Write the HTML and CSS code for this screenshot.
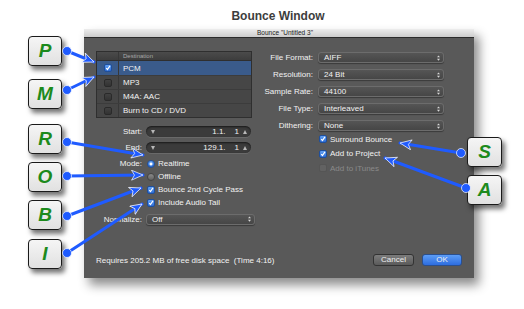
FILE: index.html
```html
<!DOCTYPE html>
<html lang="en">
<head>
    <meta charset="UTF-8">
    <title>Bounce Window</title>
    <link rel="stylesheet" href="styles.css">
</head>
<body>
    <div class="stage">
        <h1 class="heading">Bounce Window</h1>

        <!-- The dialog itself -->
        <div class="window">
            <div class="titlebar">Bounce "Untitled 3"</div>
            <div class="panel">
                <div class="columns">
                    <div class="col-left">
                        <div class="dest">
                            <div class="dest-head"><span class="cell-check"></span><span class="cell-name">Destination</span></div>
                            <div class="dest-row selected">
                                <span class="cell-check"><i class="check on"><svg viewBox="0 0 8 8"><path d="M1.6 4.1 L3.3 6 L6.6 1.2"/></svg></i></span>
                                <span class="cell-name">PCM</span>
                            </div>
                            <div class="dest-row">
                                <span class="cell-check"><i class="check"></i></span>
                                <span class="cell-name">MP3</span>
                            </div>
                            <div class="dest-row">
                                <span class="cell-check"><i class="check"></i></span>
                                <span class="cell-name">M4A: AAC</span>
                            </div>
                            <div class="dest-row">
                                <span class="cell-check"><i class="check"></i></span>
                                <span class="cell-name">Burn to CD / DVD</span>
                            </div>
                        </div>

                        <div class="row row-start">
                            <span class="label">Start:</span>
                            <div class="spin"><i class="tri-down"></i><span class="val">1.1.</span><span class="sub">1</span><i class="tri-up"></i></div>
                        </div>
                        <div class="row row-end">
                            <span class="label">End:</span>
                            <div class="spin"><i class="tri-down"></i><span class="val">129.1.</span><span class="sub">1</span><i class="tri-up"></i></div>
                        </div>
                        <div class="row row-opt row-mode">
                            <span class="label">Mode:</span>
                            <div class="opt"><i class="radio on"></i>Realtime</div>
                        </div>
                        <div class="row row-opt">
                            <span class="label"></span>
                            <div class="opt"><i class="radio"></i>Offline</div>
                        </div>
                        <div class="row row-opt">
                            <span class="label"></span>
                            <div class="opt"><i class="check on"><svg viewBox="0 0 8 8"><path d="M1.6 4.1 L3.3 6 L6.6 1.2"/></svg></i>Bounce 2nd Cycle Pass</div>
                        </div>
                        <div class="row row-opt">
                            <span class="label"></span>
                            <div class="opt"><i class="check on"><svg viewBox="0 0 8 8"><path d="M1.6 4.1 L3.3 6 L6.6 1.2"/></svg></i>Include Audio Tail</div>
                        </div>
                        <div class="row row-norm">
                            <span class="label">Normalize:</span>
                            <div class="select wide">Off<svg class="updown" viewBox="0 0 4 8"><path d="M0 3 L2 0.5 L4 3 Z M0 5 L2 7.5 L4 5 Z"/></svg></div>
                        </div>
                    </div>

                    <div class="col-right">
                        <div class="row row-sel">
                            <span class="label">File Format:</span>
                            <div class="select">AIFF<svg class="updown" viewBox="0 0 4 8"><path d="M0 3 L2 0.5 L4 3 Z M0 5 L2 7.5 L4 5 Z"/></svg></div>
                        </div>
                        <div class="row row-sel">
                            <span class="label">Resolution:</span>
                            <div class="select">24 Bit<svg class="updown" viewBox="0 0 4 8"><path d="M0 3 L2 0.5 L4 3 Z M0 5 L2 7.5 L4 5 Z"/></svg></div>
                        </div>
                        <div class="row row-sel">
                            <span class="label">Sample Rate:</span>
                            <div class="select">44100<svg class="updown" viewBox="0 0 4 8"><path d="M0 3 L2 0.5 L4 3 Z M0 5 L2 7.5 L4 5 Z"/></svg></div>
                        </div>
                        <div class="row row-sel">
                            <span class="label">File Type:</span>
                            <div class="select">Interleaved<svg class="updown" viewBox="0 0 4 8"><path d="M0 3 L2 0.5 L4 3 Z M0 5 L2 7.5 L4 5 Z"/></svg></div>
                        </div>
                        <div class="row row-sel">
                            <span class="label">Dithering:</span>
                            <div class="select">None<svg class="updown" viewBox="0 0 4 8"><path d="M0 3 L2 0.5 L4 3 Z M0 5 L2 7.5 L4 5 Z"/></svg></div>
                        </div>

                        <div class="right-checks">
                            <div class="opt"><i class="check on"><svg viewBox="0 0 8 8"><path d="M1.6 4.1 L3.3 6 L6.6 1.2"/></svg></i>Surround Bounce</div>
                            <div class="opt"><i class="check on"><svg viewBox="0 0 8 8"><path d="M1.6 4.1 L3.3 6 L6.6 1.2"/></svg></i>Add to Project</div>
                            <div class="opt disabled"><i class="check"></i>Add to iTunes</div>
                        </div>
                    </div>
                </div>

                <div class="footer">
                    <span class="disk">Requires 205.2 MB of free disk space  (Time 4:16)</span>
                    <div class="buttons">
                        <span class="btn">Cancel</span>
                        <span class="btn ok">OK</span>
                    </div>
                </div>
            </div>
        </div>

        <!-- Lettered callouts -->
        <div class="callout callout-p">P</div>
        <div class="callout callout-m">M</div>
        <div class="callout callout-r">R</div>
        <div class="callout callout-o">O</div>
        <div class="callout callout-b">B</div>
        <div class="callout callout-i">I</div>
        <div class="callout callout-s">S</div>
        <div class="callout callout-a">A</div>

        <svg class="arrows" viewBox="0 0 524 309" width="524" height="309">
            <defs>
                <marker id="head" markerUnits="userSpaceOnUse" markerWidth="14" markerHeight="12" refX="12" refY="5.5" orient="auto">
                    <path d="M0.5 0.5 L12 5.5 L0.5 10.5 L3.5 5.5 Z" fill="#1f5bff" stroke="#fff" stroke-width="0.7"/>
                </marker>
            </defs>
            <g stroke="#1f5bff" stroke-width="3" stroke-linecap="round" marker-end="url(#head)">
                <line x1="67" y1="51" x2="94" y2="62"/>
                <line x1="67" y1="90" x2="94" y2="77"/>
                <line x1="67" y1="142" x2="143" y2="155"/>
                <line x1="67" y1="176" x2="143" y2="175"/>
                <line x1="67" y1="216" x2="141" y2="188"/>
                <line x1="67" y1="253" x2="142" y2="204"/>
                <line x1="461" y1="153" x2="400" y2="143"/>
                <line x1="466" y1="188" x2="385" y2="158"/>
            </g>
            <g fill="#1f5bff" stroke="#fff" stroke-width="0.7">
                <circle cx="67" cy="51" r="4.5"/>
                <circle cx="67" cy="90" r="4.5"/>
                <circle cx="67" cy="142" r="4.5"/>
                <circle cx="67" cy="176" r="4.5"/>
                <circle cx="67" cy="216" r="4.5"/>
                <circle cx="67" cy="253" r="4.5"/>
                <circle cx="461" cy="153" r="4.5"/>
                <circle cx="466" cy="188" r="4.5"/>
            </g>
        </svg>
    </div>
</body>
</html>
```

FILE: styles.css
```css
/* Bounce window screenshot with callouts */
* {
    box-sizing: border-box;
}
body {
    margin: 0;
    background: #fff;
    font-family: "Liberation Sans", Arial, sans-serif;
}
.stage {
    position: relative;
    width: 524px;
    height: 309px;
    overflow: hidden;
}
.heading {
    margin: 0;
    height: 29px;
    padding: 10px 0 0 32px;
    text-align: center;
    font-size: 12px;
    line-height: 12px;
    font-weight: bold;
    color: #3d3d3d;
}

/* Window */
.window {
    margin-left: 84px;
    width: 390px;
    height: 249px;
    display: flex;
    flex-direction: column;
    background: #595959;
    box-shadow: 5px 7px 10px rgba(0, 0, 0, 0.45);
}
.titlebar {
    height: 9px;
    padding-left: 12px;
    background: linear-gradient(#ededed, #cdcdcd);
    border-bottom: 1px solid #2c2c2c;
    font-size: 6.5px;
    line-height: 8px;
    text-align: center;
    color: #222;
}
.panel {
    flex: 1;
    display: flex;
    flex-direction: column;
    padding: 13px 12px 12px 12px;
    color: #f2f2f2;
    font-size: 8px;
}
.columns {
    display: flex;
    align-items: flex-start;
}
.col-left {
    width: 159px;
}
.col-right {
    width: 186px;
    margin-left: 3px;
    margin-top: -2px;
}

/* Destination table */
.dest {
    width: 156px;
    background: #464646;
    border: 1px solid #2f2f2f;
}
.dest-head {
    display: flex;
    height: 9px;
    background: linear-gradient(#4b4b4b, #3d3d3d);
    border-bottom: 1px solid #2f2f2f;
    font-size: 6px;
    line-height: 8px;
    color: #a8a8a8;
}
.dest-row {
    display: flex;
    align-items: center;
    height: 14px;
    border-top: 1px solid #3c3c3c;
}
.dest-row:nth-child(2) {
    border-top: none;
}
.dest-row.selected {
    background: #3a5b8b;
}
.cell-check {
    width: 22px;
    align-self: stretch;
    display: flex;
    align-items: center;
    justify-content: center;
    border-right: 1px solid #383838;
}
.cell-name {
    padding-left: 4px;
}

/* Check boxes and radios */
.check {
    display: inline-block;
    width: 8px;
    height: 8px;
    border-radius: 2px;
    background: linear-gradient(#424242, #333);
    border: 1px solid #2a2a2a;
}
.check.on {
    background: linear-gradient(#63a2f5, #2c6cd5);
    border-color: #1f4f9c;
}
.check svg {
    display: block;
    width: 6px;
    height: 6px;
}
.check svg path {
    fill: none;
    stroke: #fff;
    stroke-width: 1.5;
}
.radio {
    display: inline-block;
    width: 8px;
    height: 8px;
    border-radius: 50%;
    background: linear-gradient(#8a8a8a, #626262);
    border: 1px solid #444;
}
.radio.on {
    background: radial-gradient(circle, #fff 0 1.2px, transparent 1.8px), linear-gradient(#63a2f5, #2c6cd5);
    border-color: #1f4f9c;
}

/* Label + control rows */
.row {
    display: flex;
    align-items: center;
}
.label {
    width: 46px;
    margin-right: 4px;
    text-align: right;
    white-space: nowrap;
}
.col-right .label {
    width: 55px;
    margin-right: 5px;
}
.row-start {
    margin-top: 8px;
    height: 11px;
}
.row-end {
    margin-top: 5px;
    height: 11px;
}
.row-opt {
    height: 13px;
}
.row-mode {
    margin-top: 4px;
}
.row-norm {
    margin-top: 4px;
    height: 12px;
}
.row-sel {
    height: 17px;
}
.opt {
    display: flex;
    align-items: center;
    gap: 3px;
    padding-left: 1px;
    white-space: nowrap;
}
.opt.disabled {
    color: #8a8a8a;
}
.opt.disabled .check {
    background: #626262;
    border-color: #555;
}
.right-checks {
    margin-left: 60px;
    margin-top: -2px;
}
.right-checks .opt {
    height: 14.5px;
}

/* Spin fields */
.spin {
    width: 105px;
    height: 11px;
    display: flex;
    align-items: center;
    padding: 0 4px 0 5px;
    border-radius: 6px;
    background: #3b3b3b;
    box-shadow: inset 0 1px 2px rgba(0, 0, 0, 0.6), 0 1px 0 rgba(255, 255, 255, 0.1);
}
.spin .val {
    margin-left: auto;
}
.spin .sub {
    margin-left: 9px;
}
.tri-down, .tri-up {
    width: 0;
    height: 0;
    border-left: 2.5px solid transparent;
    border-right: 2.5px solid transparent;
}
.tri-down {
    border-top: 4px solid #b8b8b8;
}
.tri-up {
    margin-left: 4px;
    border-bottom: 4px solid #b8b8b8;
}

/* Popup menus */
.select {
    width: 126px;
    height: 11px;
    display: flex;
    align-items: center;
    padding: 0 3px 0 5px;
    border-radius: 3px;
    background: linear-gradient(#555, #464646);
    border: 1px solid #6c6c6c;
    box-shadow: 0 1px 1px rgba(0, 0, 0, 0.35);
}
.select.wide {
    width: 109px;
}
.updown {
    margin-left: auto;
    width: 3px;
    height: 6px;
    fill: #d8d8d8;
}

/* Footer */
.footer {
    margin-top: auto;
    display: flex;
    align-items: center;
    height: 12px;
}
.disk {
    white-space: pre;
}
.buttons {
    margin-left: auto;
    display: flex;
    gap: 8px;
}
.btn {
    width: 41px;
    height: 12px;
    border-radius: 3px;
    border: 1px solid #333;
    background: linear-gradient(#7c7c7c, #5a5a5a);
    color: #eee;
    text-align: center;
    line-height: 10px;
}
.btn.ok {
    width: 40px;
    background: linear-gradient(#5c9df6, #2d6de0);
    border-color: #2a4f8e;
}

/* Lettered callouts */
.callout {
    position: absolute;
    left: 28px;
    width: 34px;
    height: 30px;
    display: flex;
    align-items: center;
    justify-content: center;
    background: linear-gradient(#f5f5f5, #e1e1e1);
    border: 1px solid #1a1a1a;
    border-radius: 4px;
    box-shadow: 3px 4px 5px rgba(0, 0, 0, 0.55);
    color: #1c8a1c;
    font-size: 19px;
    font-weight: bold;
    font-style: italic;
}
.callout-p { top: 36px; }
.callout-m { top: 79px; }
.callout-r { top: 124px; }
.callout-o { top: 162px; }
.callout-b { top: 200px; }
.callout-i { top: 239px; }
.callout-s { top: 137px; left: 467px; width: 35px; }
.callout-a { top: 175px; left: 467px; width: 35px; }

.arrows {
    position: absolute;
    left: 0;
    top: 0;
    pointer-events: none;
}
```
